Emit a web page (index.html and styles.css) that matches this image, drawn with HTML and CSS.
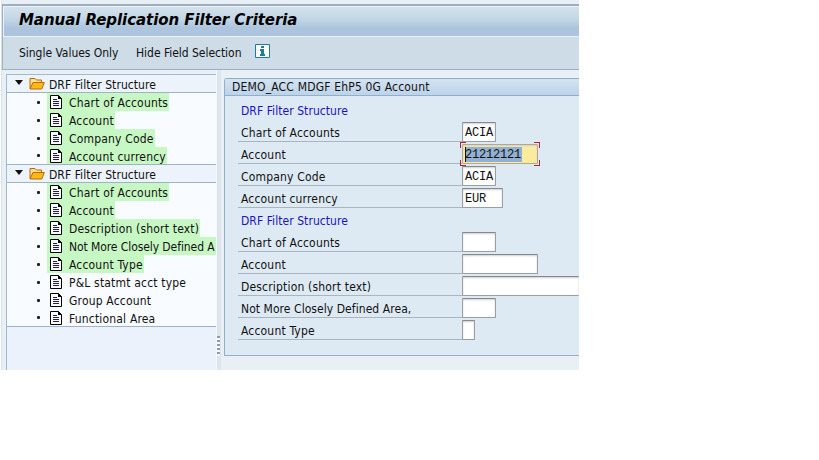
FILE: index.html
```
<!DOCTYPE html>
<html lang="en">
<head>
<meta charset="utf-8">
<title>Manual Replication Filter Criteria</title>
<link rel="stylesheet" href="styles.css">
</head>
<body>
<svg class="defs" width="0" height="0">
  <symbol id="folder" viewBox="0 0 16 13">
    <path d="M1 11.5V1.5H6L7.5 3H12.5V5.5" fill="#ffe08a" stroke="#b8690c"/>
    <path d="M1 12L4 5.5H15.3L12.8 12Z" fill="#fdb913" stroke="#b8690c"/>
  </symbol>
  <symbol id="doc" viewBox="0 0 12 14">
    <path d="M.5 .5H8.5L11.5 3.5V13.5H.5Z" fill="#fff" stroke="#000"/>
    <path d="M8 0V4H12L8 0Z" fill="#000"/>
    <path d="M3 4.5H7M3 6.5H9M3 8.5H9M3 10.5H9" stroke="#181880" fill="none"/>
  </symbol>
</svg>
<div class="window">
  <header class="top">
    <h1><span>Manual Replication Filter Criteria</span></h1>
    <nav>
      <span class="single">Single Values Only</span>
      <span class="hide">Hide Field Selection</span>
      <svg class="info" width="15" height="14" viewBox="0 0 15 14"><path d="M.5 .5H14.5V13.5H.5Z" fill="#fff" stroke="#1b7ba3"/><path d="M6 2H9V4H6ZM5 5H9V10H10V12H5V10H6V7H5Z" fill="#1b7ba3"/></svg>
    </nav>
  </header>
  <main>
    <aside class="tree">
      <div class="node head"><i class="arrow"></i><svg class="folder"><use href="#folder"/></svg><span>DRF Filter Structure</span></div>
      <div class="node"><i class="dot"></i><div class="leaf on"><svg class="doc"><use href="#doc"/></svg><span>Chart of Accounts</span></div></div>
      <div class="node"><i class="dot"></i><div class="leaf on"><svg class="doc"><use href="#doc"/></svg><span>Account</span></div></div>
      <div class="node"><i class="dot"></i><div class="leaf on"><svg class="doc"><use href="#doc"/></svg><span>Company Code</span></div></div>
      <div class="node last"><i class="dot"></i><div class="leaf on"><svg class="doc"><use href="#doc"/></svg><span>Account currency</span></div></div>
      <div class="node head"><i class="arrow"></i><svg class="folder"><use href="#folder"/></svg><span>DRF Filter Structure</span></div>
      <div class="node"><i class="dot"></i><div class="leaf on"><svg class="doc"><use href="#doc"/></svg><span>Chart of Accounts</span></div></div>
      <div class="node"><i class="dot"></i><div class="leaf on"><svg class="doc"><use href="#doc"/></svg><span>Account</span></div></div>
      <div class="node"><i class="dot"></i><div class="leaf on"><svg class="doc"><use href="#doc"/></svg><span>Description (short text)</span></div></div>
      <div class="node"><i class="dot"></i><div class="leaf on long"><svg class="doc"><use href="#doc"/></svg><span>Not More Closely Defined A</span></div></div>
      <div class="node"><i class="dot"></i><div class="leaf on"><svg class="doc"><use href="#doc"/></svg><span>Account Type</span></div></div>
      <div class="node"><i class="dot"></i><div class="leaf"><svg class="doc"><use href="#doc"/></svg><span>P&amp;L statmt acct type</span></div></div>
      <div class="node"><i class="dot"></i><div class="leaf"><svg class="doc"><use href="#doc"/></svg><span>Group Account</span></div></div>
      <div class="node last"><i class="dot"></i><div class="leaf"><svg class="doc"><use href="#doc"/></svg><span>Functional Area</span></div></div>
    </aside>
    <div class="splitter"><i class="grip"></i></div>
    <section class="group">
      <h2>DEMO_ACC MDGF EhP5 0G Account</h2>
      <div class="form">
        <h3>DRF Filter Structure</h3>
        <div class="row"><label>Chart of Accounts</label><div class="field f4">ACIA</div></div>
        <div class="row"><label>Account</label><div class="field f8 focus"><mark>21212121</mark><b class="tl"></b><b class="tr"></b><b class="bl"></b><b class="br"></b></div></div>
        <div class="row"><label>Company Code</label><div class="field f4">ACIA</div></div>
        <div class="row"><label>Account currency</label><div class="field f5">EUR</div></div>
        <h3>DRF Filter Structure</h3>
        <div class="row"><label>Chart of Accounts</label><div class="field f4"></div></div>
        <div class="row"><label>Account</label><div class="field f8"></div></div>
        <div class="row"><label>Description (short text)</label><div class="field full"></div></div>
        <div class="row"><label class="long">Not More Closely Defined Area,</label><div class="field f4"></div></div>
        <div class="row"><label>Account Type</label><div class="field f1"></div></div>
      </div>
    </section>
  </main>
</div>
</body>
</html>
```
FILE: styles.css
```
* { box-sizing: border-box; }
body { margin: 0; background: #fff; color: #111; font: 12px/18px "DejaVu Sans Condensed", "DejaVu Sans", sans-serif; font-stretch: condensed; letter-spacing: 0.06px; white-space: nowrap; }
h1, h2, h3 { margin: 0; font-weight: normal; font-size: inherit; }
.defs { display: block; height: 0; }
.window { display: flex; flex-direction: column; width: 578px; height: 370px; margin-left: 1px; padding-top: 4px; overflow: hidden; background: #e8f0f6; border-left: 1px solid #d8e2ec; }
.top { height: 66px; border: solid #9eafc4; border-width: 2px 0 1px 1px; }
h1 { height: 31px; padding-left: 15px; font: italic bold 15px/26px "DejaVu Sans", sans-serif; font-stretch: normal; color: #000; letter-spacing: -0.06px; background: linear-gradient(#d3e1ec, #c4d7e5 40%, #adc6de 70%, #abc3dc); border: solid #e9f1f9; border-width: 1px 0 1px 1px; }
nav { display: flex; height: 32px; padding: 7px 0 0 16px; letter-spacing: -0.03px; background: #cedce7; }
.single { width: 117px; }
.hide { width: 119px; }
.info { display: block; }
main { display: flex; flex: 1; min-height: 0; }
.tree { width: 210px; margin: 4px 0 0 4px; overflow: hidden; background: #ebf2fb; border: solid #a5b7cb; border-width: 1px 0 0 1px; }
.node { display: flex; align-items: center; height: 18px; line-height: 20px; background: #f8fbff; }
.node span { height: 18px; }
.head { background: #ecf3fb; border-bottom: 1px solid #9fb2c8; }
.last { border-bottom: 1px solid #9fb2c8; }
.arrow { margin: -3px 6px 0 8px; border: solid transparent; border-width: 5px 4px 0; border-top-color: #111; }
.folder { width: 16px; height: 13px; margin-right: 4px; flex: none; }
.dot { width: 3px; height: 3px; margin: 0 7px 0 30px; background: #222; border-radius: 1px; flex: none; }
.leaf { display: flex; align-items: center; height: 100%; padding: 0 1px 0 3px; letter-spacing: 0.18px; flex: none; }
.on { background: #c7f8c3; }
.doc { width: 12px; height: 14px; margin-right: 7px; flex: none; }
.splitter { width: 5px; padding-top: 266px; border-left: 1px solid #f4f8fc; background: #dce5ec; }
.grip { display: block; width: 3px; height: 20px; background: repeating-linear-gradient(#929ba5 0 2px, #f5f7f9 2px 4px); }
.group { flex: 1; height: 278px; margin: 8px 0 0 3px; background: #deeaf3; border: solid #91aecd; border-width: 1px 0 1px 1px; border-top-left-radius: 3px; }
h2 { height: 17px; padding-left: 7px; line-height: 17px; letter-spacing: 0.18px; background: linear-gradient(#d4e3f1, #bdd3e8); border-bottom: 1px solid #91aecd; }
.form { padding: 2px 0 0 13px; }
h3 { height: 22px; padding-left: 3px; line-height: 27px; color: #1c12c5; }
.row { display: flex; align-items: flex-end; height: 22px; }
label { width: 224px; height: 22px; padding-left: 3px; line-height: 26px; letter-spacing: 0.18px; border-bottom: 1px solid #aab6bf; flex: none; }
label.long { letter-spacing: 0.06px; }
.leaf.long { letter-spacing: -0.08px; padding-right: 4px; }
.field { position: relative; height: 20px; padding: 0 2px; background: #fff; border: 1px solid #9b9fa3; border-top-color: #85898d; border-radius: 1px; box-shadow: inset 0 1px 2px #ccd0d4; color: #111; font: 12px/20px "Liberation Mono", monospace; letter-spacing: -0.2px; }
.f4 { width: 34px; }
.f5 { width: 41px; }
.f8 { width: 76px; }
.f1 { width: 13px; }
.full { flex: 1; border-right: 0; }
.focus { background: #fdeb9d; border-color: #b0a98b; }
mark { display: block; width: 57px; height: 15px; margin-top: 2px; line-height: 16px; background: #91b0d2; color: #111; box-shadow: inset 1px 0 #111; }
.focus b { position: absolute; width: 6px; height: 6px; border: 0 solid #b52530; }
.focus .tl { left: -3px; top: -3px; border-width: 1px 0 0 1px; }
.focus .tr { right: -3px; top: -3px; border-width: 1px 1px 0 0; }
.focus .bl { left: -3px; bottom: -3px; border-width: 0 0 1px 1px; }
.focus .br { right: -3px; bottom: -3px; border-width: 0 1px 1px 0; }
```
